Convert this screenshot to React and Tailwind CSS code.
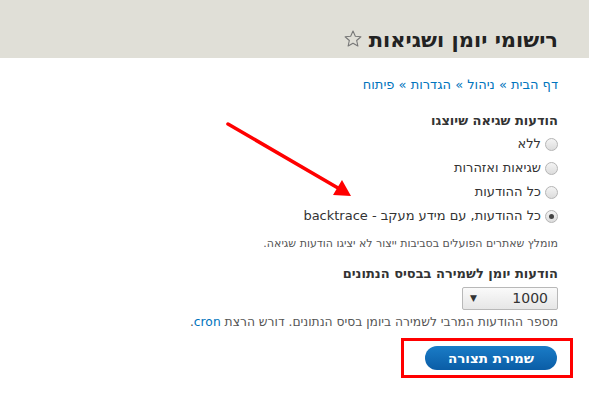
import React from "react";

const LEVELS = [
  { label: "ללא", checked: false },
  { label: "שגיאות ואזהרות", checked: false },
  { label: "כל ההודעות", checked: false },
  { label: "כל ההודעות, עם מידע מעקב - backtrace", checked: true },
];

const Radio = ({ checked }) => (
  <span className="w-[13px] h-[13px] rounded-full border border-[#b5b5b5] bg-gradient-to-b from-[#f4f4f4] to-[#dcdcdc] flex items-center justify-center shrink-0">
    {checked && <span className="w-[5px] h-[5px] rounded-full bg-[#444]" />}
  </span>
);

export default function App() {
  return (
    <div dir="rtl" className="w-[589px] h-[417px] bg-white overflow-hidden relative font-['DejaVu_Sans',sans-serif] text-[#333]">
      <header className="h-[58px] bg-[#e0dfd7] px-[31px] pt-[26px]">
        <h1 className="flex items-center gap-[6px] text-[21px] leading-[28px] font-bold text-[#222]">
          רישומי יומן ושגיאות
          <svg width="20" height="20" viewBox="0 0 24 24" className="mt-[-2px]">
            <path d="M12 2.5l2.8 6.2 6.7.6-5.1 4.5 1.5 6.6L12 17l-5.9 3.4 1.5-6.6-5.1-4.5 6.7-.6z" fill="none" stroke="#777" strokeWidth="1.3" strokeLinejoin="round" />
          </svg>
        </h1>
      </header>

      <main className="px-[31px]">
        <nav className="mt-[18px] text-[13px] leading-[18px] text-[#0074bd]">
          <a>דף הבית</a> » <a>ניהול</a> » <a>הגדרות</a> » <a>פיתוח</a>
        </nav>

        <section className="mt-[18px]">
          <h2 className="text-[13px] leading-[18px] font-bold">הודעות שגיאה שיוצגו</h2>
          <div className="mt-[5px] flex flex-col gap-[6px]">
            {LEVELS.map(({ label, checked }) => (
              <label key={label} className="flex items-center gap-[4px] text-[13px] leading-[18px]">
                <Radio checked={checked} />
                {label}
              </label>
            ))}
          </div>
          <p className="mt-[11px] text-[11px] leading-[16px] text-[#555]">
            מומלץ שאתרים הפועלים בסביבות ייצור לא יציגו הודעות שגיאה.
          </p>
        </section>

        <section className="mt-[13px]">
          <h2 className="text-[13px] leading-[18px] font-bold">הודעות יומן לשמירה בבסיס הנתונים</h2>
          <div className="mt-[4px] w-[96px] h-[23px] border border-[#b8b8b8] rounded-[2px] bg-gradient-to-b from-[#fafafa] to-[#e6e6e6] flex items-center justify-between pr-[9px] pl-[7px] text-[14px]">
            <span>1000</span>
            <span className="text-[9px] text-[#333]">▼</span>
          </div>
          <p className="mt-[4px] text-[12.3px] leading-[16px] text-[#555]">
            מספר ההודעות המרבי לשמירה ביומן בסיס הנתונים. דורש הרצת <a className="text-[#0074bd]">cron</a>.
          </p>
        </section>

        <div className="mt-[8px] mr-[-15px] w-[172px] h-[40px] border-[3px] border-[#ff0000] flex items-center justify-start pr-[13px]">
          <button className="w-[132px] h-[24px] rounded-full bg-gradient-to-b from-[#1a7cc7] to-[#0a5da6] text-white text-[13.5px] font-bold">
            שמירת תצורה
          </button>
        </div>
      </main>

      <svg className="absolute left-0 top-0 pointer-events-none" width="589" height="417">
        <line x1="228" y1="124" x2="338" y2="188" stroke="#ff0000" strokeWidth="3.5" strokeLinecap="round" />
        <polygon points="351,196 333,195 342,180" fill="#ff0000" />
      </svg>
    </div>
  );
}
